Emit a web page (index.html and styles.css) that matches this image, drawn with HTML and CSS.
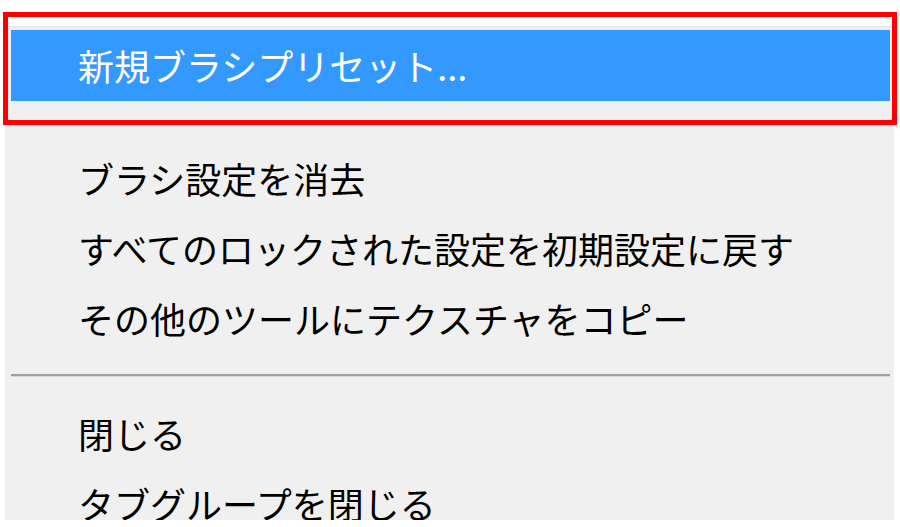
FILE: index.html
```html
<!DOCTYPE html>
<html lang="ja">
<head>
  <meta charset="UTF-8">
  <title>ブラシプリセットメニュー</title>
  <link rel="stylesheet" href="styles.css">
</head>
<body>
  <div class="menu">
    <div class="menu-item active">新規ブラシプリセット...</div>
    <div class="menu-gap"></div>
    <div class="menu-item">ブラシ設定を消去</div>
    <div class="menu-item">すべてのロックされた設定を初期設定に戻す</div>
    <div class="menu-item">その他のツールにテクスチャをコピー</div>
    <div class="menu-separator"></div>
    <div class="menu-item">閉じる</div>
    <div class="menu-item">タブグループを閉じる</div>
  </div>

  <!-- annotation frame -->
  <div class="highlight-frame"></div>
</body>
</html>
```

FILE: styles.css
```css
body {
  margin: 0;
  background: #ffffff;
  font-family: "Noto Sans CJK JP", "Noto Sans", sans-serif;
  position: relative;
  height: 527px;
  overflow: hidden;
}

.menu {
  margin: 26px 0 0 5px;
  width: 889px;
  height: 494px;
  padding-top: 3px;
  box-sizing: border-box;
  background: #f0f0f0;
  border-top: 1px solid #e4e4e4;
  overflow: hidden;
}

.menu-item {
  height: 70px;
  line-height: 70px;
  padding-left: 73px;
  font-size: 36px;
  color: #000000;
  white-space: nowrap;
}

.menu-item.active {
  height: 71px;
  line-height: 71px;
  margin: 0 4px 0 6px;
  padding-left: 67px;
  background: #3399ff;
  color: #ffffff;
}

.menu-gap {
  height: 42px;
}

.menu-separator {
  height: 45px;
  margin: 0 4px 0 6px;
  display: flex;
  align-items: center;
}

.menu-separator::before {
  content: "";
  flex: 1;
  height: 0;
  border-top: 2px solid #a0a0a0;
  border-bottom: 1px solid #d8d8d8;
}

.highlight-frame {
  position: absolute;
  left: 3px;
  top: 12px;
  width: 894px;
  height: 113px;
  border: 5px solid #ff0000;
  box-sizing: border-box;
}
```
